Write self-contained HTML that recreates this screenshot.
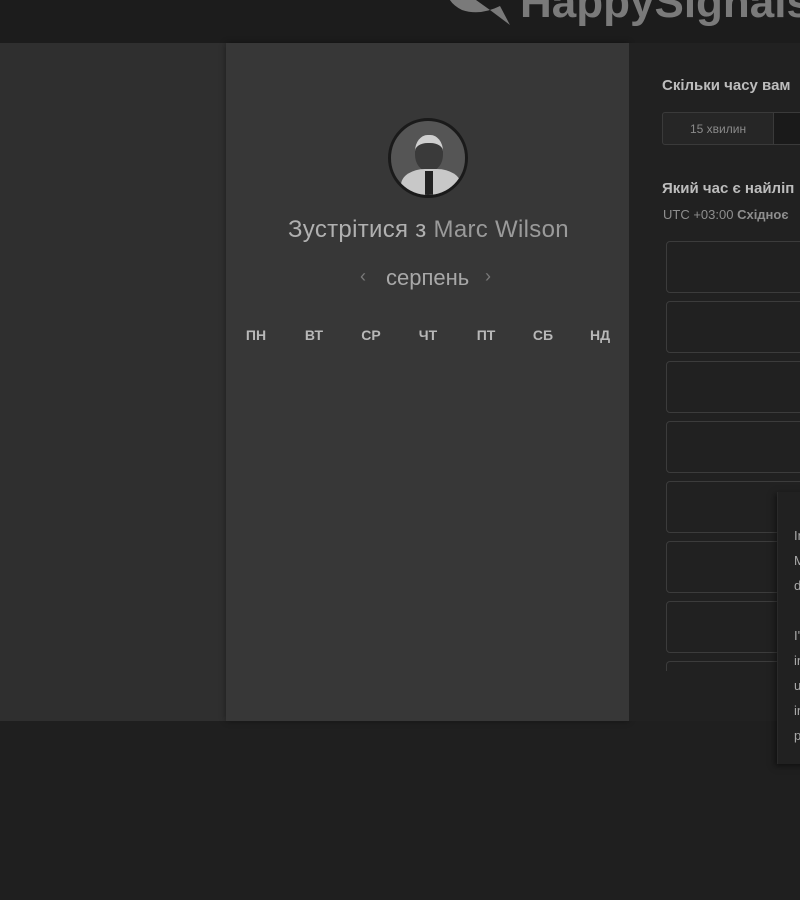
<!DOCTYPE html>
<html><head><meta charset="utf-8"><style>
*{margin:0;padding:0;box-sizing:border-box}
body{width:800px;height:900px;background:#1f1f1f;position:relative;overflow:hidden;font-family:"Liberation Sans","DejaVu Sans",sans-serif}
.top{position:absolute;left:0;top:0;width:800px;height:43px;background:#1c1c1c}
.mid{position:absolute;left:0;top:43px;width:800px;height:678px;background:#2f2f2f}
.left{position:absolute;left:226px;top:43px;width:403px;height:678px;background:#373737;box-shadow:0 0 6px rgba(0,0,0,.4)}
.right{position:absolute;left:629px;top:43px;width:171px;height:678px;background:#212121}
.t{position:absolute;white-space:nowrap}
.box{position:absolute;left:666px;width:150px;height:52px;border:1px solid #3c3c3c;border-radius:4px}
.pop{position:absolute;left:777px;top:492px;width:40px;height:272px;background:#212121;box-shadow:-2px 2px 6px rgba(0,0,0,.5);border-left:1px solid #2a2a2a}
.pop div{position:absolute;left:16px;color:#a8a8a8;font-size:13px}
.d{top:327px;font-size:14px;font-weight:bold;color:#b8b8b8;width:40px;text-align:center}
</style></head><body>
<div class="top"></div>
<svg style="position:absolute;left:440px;top:-20px" width="75" height="50"><path d="M8 0 Q2 20 22 30 Q40 36 60 26 L70 45 L50 30 Z" fill="#7a7a7a"/></svg>
<div class="t" style="left:520px;top:-22px;font-size:44px;font-weight:bold;color:#7a7a7a">HappySignals</div>
<div class="mid"></div>
<div class="left"></div>
<div class="right"></div>
<div style="position:absolute;left:388px;top:118px;width:80px;height:80px;border-radius:50%;border:3px solid #1a1a1a;background:#555;overflow:hidden">
<div style="position:absolute;left:24px;top:14px;width:28px;height:36px;border-radius:45%;background:#3a3a3a;border-top:8px solid #cfcfcf"></div>
<div style="position:absolute;left:10px;top:48px;width:60px;height:40px;border-radius:40% 40% 0 0;background:#c8c8c8"></div>
<div style="position:absolute;left:34px;top:50px;width:8px;height:28px;background:#222"></div>
</div>
<div class="t" style="left:288px;top:216px;font-size:24px;letter-spacing:0.3px;color:#b0b0b0">Зустрітися з <span style="color:#9a9a9a">Marc Wilson</span></div>
<div class="t" style="left:360px;top:266px;font-size:18px;color:#7a7a7a">‹</div>
<div class="t" style="left:386px;top:265px;font-size:22px;color:#a8a8a8">серпень</div>
<div class="t" style="left:485px;top:266px;font-size:18px;color:#7a7a7a">›</div>
<div class="t d" style="left:236px">ПН</div>
<div class="t d" style="left:294px">ВТ</div>
<div class="t d" style="left:351px">СР</div>
<div class="t d" style="left:408px">ЧТ</div>
<div class="t d" style="left:466px">ПТ</div>
<div class="t d" style="left:523px">СБ</div>
<div class="t d" style="left:580px">НД</div>
<div class="t" style="left:662px;top:77px;font-size:15px;font-weight:bold;color:#bdbdbd">Скільки часу вам</div>
<div style="position:absolute;left:662px;top:112px;width:150px;height:33px;border:1px solid #3a3a3a;border-radius:3px;background:#262626"></div>
<div style="position:absolute;left:773px;top:112px;width:1px;height:33px;background:#3a3a3a"></div>
<div style="position:absolute;left:774px;top:113px;width:30px;height:31px;background:#1a1a1a"></div>
<div class="t" style="left:690px;top:122px;font-size:12px;color:#8a8a8a">15 хвилин</div>
<div class="t" style="left:662px;top:180px;font-size:15px;font-weight:bold;color:#bdbdbd">Який час є найліп</div>
<div class="t" style="left:663px;top:207px;font-size:13px;color:#8e8e8e">UTC +03:00 <span style="font-weight:bold">Східноє</span></div>
<div class="box" style="top:241px"></div>
<div class="box" style="top:301px"></div>
<div class="box" style="top:361px"></div>
<div class="box" style="top:421px"></div>
<div class="box" style="top:481px"></div>
<div class="box" style="top:541px"></div>
<div class="box" style="top:601px"></div>
<div class="box" style="top:661px;height:10px;border-bottom:none;border-radius:4px 4px 0 0"></div>
<div style="position:absolute;left:629px;top:671px;width:171px;height:50px;background:#212121"></div>
<div class="pop">
<div style="top:36px">In</div><div style="top:61px">M</div><div style="top:86px">d</div>
<div style="top:136px">I'</div><div style="top:161px">in</div><div style="top:186px">u</div><div style="top:211px">in</div><div style="top:236px">p</div>
</div>
</body></html>
